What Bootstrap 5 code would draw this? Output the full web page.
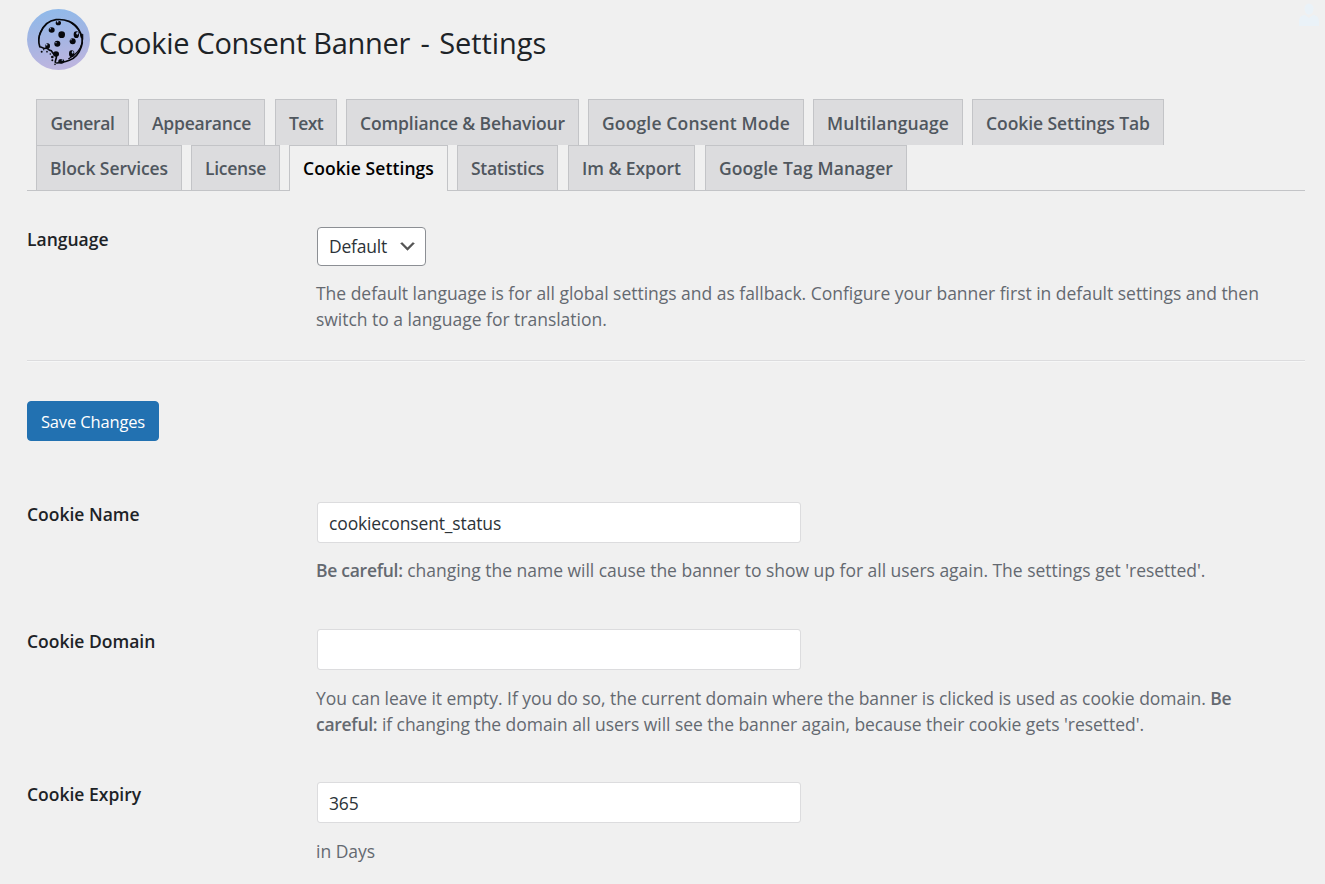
<!DOCTYPE html>
<html lang="en">
<head>
<meta charset="utf-8">
<meta name="viewport" content="width=device-width, initial-scale=1">
<title>Cookie Consent Banner - Settings</title>
<link href="https://cdn.jsdelivr.net/npm/bootstrap@5.3.0/dist/css/bootstrap.min.css" rel="stylesheet">
<style>
body{background:#f0f0f0;font-family:"Open Sans","Noto Sans",sans-serif;font-size:17.5px;line-height:26px;color:#646970;overflow:hidden}
.wrap-page{padding:9px 20px 0 27px}
.page-title{font-size:29px;line-height:40px;color:#1d2327;letter-spacing:-.08px;margin:14px 0 0 9px;font-weight:400}
.page-title .plugin-name{letter-spacing:-.3px}
.page-title .dash{margin:0 2px 0 3px}
.head-icon{width:63px;height:61px;flex:none}
.tab-bar{margin-top:29px;padding-left:9px;border-bottom:1px solid #c3c4c7}
.tab-row{gap:9px}
.tab-row .nav-link{height:46px;border:1px solid #c3c4c7;border-bottom:0;border-radius:0;background:#dcdcde;color:#50575e;font-weight:600;line-height:26px;padding:10px 0 0;text-align:center;white-space:nowrap;flex:none}
.tab-row.second .nav-link{height:45px;padding-top:9px}
.tab-row.second .nav-link.active{background:#f0f0f0;color:#000;height:46px;margin-bottom:-1px}
.t-general{width:93px;letter-spacing:-.37px}
.t-appearance{width:127px;letter-spacing:-.22px;margin-right:1px}
.t-text{width:62px;letter-spacing:-.6px}
.t-compliance{width:233px;letter-spacing:-.12px}
.t-consent{width:216px;letter-spacing:.15px}
.t-multi{width:150px;letter-spacing:.09px}
.t-tab{width:192px;letter-spacing:-.07px}
.t-block{width:146px;letter-spacing:-.08px}
.t-license{width:89px;letter-spacing:-.27px}
.t-cookie{width:159px;letter-spacing:.08px}
.t-stats{width:101px;letter-spacing:-.3px;margin-right:1px}
.t-export{width:127px;letter-spacing:-.05px;margin-right:1px}
.t-gtm{width:202px;letter-spacing:.08px}
.row-lang{margin-top:36px}
.row-name{margin-top:61px}
.row-domain{margin-top:46px}
.row-expiry{margin-top:45px}
.field-label{width:290px;flex:none;font-weight:600;color:#1d2327;margin-top:-1px}
.form-control,.form-select{font-size:17.5px;color:#2c3338;letter-spacing:-.14px}
.form-control{width:484px;height:41px;border-color:#dcdcde;border-radius:3px;padding:0 11px}
.form-select{width:109px;height:39px;border-color:#8c8f94;border-radius:4px;padding:0 30px 0 11px;letter-spacing:-.2px;background-image:url("data:image/svg+xml,%3Csvg xmlns='http://www.w3.org/2000/svg' viewBox='0 0 20 20'%3E%3Cpath d='M5 6l5 5 5-5 2 1-7 7-7-7 2-1z' fill='%23555'/%3E%3C/svg%3E");background-size:21px 21px;background-position:right 7px top 8px}
.hint{margin:14px 0 0 -1px;letter-spacing:-.02px;width:960px}
.row-domain .hint,.row-expiry .hint{margin-top:15px}
.row-domain .hint{letter-spacing:-.045px}
.hint b{font-weight:600;letter-spacing:-.28px}
.divider{height:2px;margin-top:28px;background:linear-gradient(#dcdcde 50%,#f6f7f7 50%)}
.btn-save{width:132px;height:40px;margin-top:39px;padding:0;background:#2271b1;border-color:#2271b1;color:#fff;border-radius:4px;font-size:16.5px;letter-spacing:-.15px;line-height:40px}
.ghost-user{top:2px;right:6px;width:22px;height:26px}
</style>
</head>
<body>
<svg class="ghost-user position-absolute" viewBox="0 0 22 26" fill="#eaf2f8"><ellipse cx="12" cy="7" rx="4.500" ry="5.500"/><path d="M2 24v-5c0-4 3-6 6-6l4 3 4-3c3 0 6 2 6 6v5z"/></svg>
<main class="wrap-page">
  <header class="d-flex">
    <svg class="head-icon" viewBox="21 27 189 183">
      <defs><linearGradient id="sky" x1="0" y1="0" x2=".15" y2="1"><stop offset="0" stop-color="#8ebaea"/><stop offset=".5" stop-color="#a2b5e3"/><stop offset="1" stop-color="#bcb5df"/></linearGradient></defs>
      <ellipse cx="115.500" cy="118.500" rx="94.500" ry="91.500" fill="url(#sky)"/>
      <g fill="none" stroke="#07080c" stroke-linecap="round" stroke-linejoin="round">
        <path stroke-width="5" d="M59 139c-4-14-3-30 3-42 8-20 25-35 46-38 27-3 54 7 68 29 10 16 14 34 8 52-7 21-18 34-36 41-14 5-25 8-38 8"/>
        <path stroke-width="3.500" d="M56 118c1-15 7-29 18-40M154 69c17 11 27 26 30 44M188 103c2 20-4 38-15 52-8 10-17 16-27 21"/>
        <path stroke-width="5" d="M60 141c8-1 10 7 16 4 6-3 9 5 14 6 7-1 6 9 12 11 8 0 7 6 7 11-1 6-4 10-3 14"/>
      </g>
      <g fill="#07080c">
        <ellipse cx="115" cy="69" rx="8" ry="7"/><ellipse cx="95" cy="90" rx="9" ry="8"/><circle cx="125" cy="104" r="10"/><ellipse cx="169" cy="104" rx="8" ry="10"/><circle cx="112" cy="131" r="9"/><circle cx="158" cy="124" r="9"/><ellipse cx="83" cy="138" rx="7" ry="8"/><ellipse cx="108" cy="162" rx="9" ry="8"/><ellipse cx="155" cy="161" rx="8" ry="10"/><ellipse cx="124" cy="184" rx="9" ry="7"/>
        <circle cx="65" cy="155" r="3"/><circle cx="71" cy="149" r="2"/><circle cx="81" cy="155" r="2.500"/><circle cx="91" cy="162" r="2.500"/><circle cx="97" cy="171" r="4"/><circle cx="97" cy="181" r="3"/><circle cx="105" cy="193" r="2.500"/>
      </g>
      <g fill="#a4b6e3"><circle cx="113" cy="65" r="2.500"/><circle cx="91" cy="86" r="2"/><ellipse cx="172" cy="100" rx="3" ry="4"/><circle cx="108" cy="128" r="2"/><circle cx="153" cy="119" r="2"/><circle cx="80" cy="134" r="2.500"/><ellipse cx="158" cy="157" rx="2.500" ry="4"/><circle cx="127" cy="180" r="2.500"/></g>
    </svg>
    <h1 class="page-title"><span class="plugin-name">Cookie Consent Banner</span> <span class="dash">-</span> Settings</h1>
  </header>

  <nav class="tab-bar" aria-label="Settings sections">
    <div class="nav tab-row flex-nowrap">
      <a class="nav-link t-general" href="#">General</a>
      <a class="nav-link t-appearance" href="#">Appearance</a>
      <a class="nav-link t-text" href="#">Text</a>
      <a class="nav-link t-compliance" href="#">Compliance &amp; Behaviour</a>
      <a class="nav-link t-consent" href="#">Google Consent Mode</a>
      <a class="nav-link t-multi" href="#">Multilanguage</a>
      <a class="nav-link t-tab" href="#">Cookie Settings Tab</a>
    </div>
    <div class="nav tab-row second flex-nowrap">
      <a class="nav-link t-block" href="#">Block Services</a>
      <a class="nav-link t-license" href="#">License</a>
      <a class="nav-link t-cookie active" href="#">Cookie Settings</a>
      <a class="nav-link t-stats" href="#">Statistics</a>
      <a class="nav-link t-export" href="#">Im &amp; Export</a>
      <a class="nav-link t-gtm" href="#">Google Tag Manager</a>
    </div>
  </nav>

  <form>
    <div class="d-flex row-lang">
      <label class="field-label" for="lang">Language</label>
      <div>
        <select class="form-select" id="lang"><option>Default</option></select>
        <p class="hint">The default language is for all global settings and as fallback. Configure your banner first in default settings and then<br>switch to a language for translation.</p>
      </div>
    </div>
    <div class="divider"></div>
    <button type="button" class="btn btn-save d-block">Save Changes</button>
    <div class="d-flex row-name">
      <label class="field-label" for="cname">Cookie Name</label>
      <div>
        <input class="form-control" id="cname" value="cookieconsent_status">
        <p class="hint">
          <b>Be careful:</b> changing the name will cause the banner to show up for all users again. The settings get 'resetted'.</p>
      </div>
    </div>
    <div class="d-flex row-domain">
      <label class="field-label" for="cdomain">Cookie Domain</label>
      <div>
        <input class="form-control" id="cdomain">
        <p class="hint">You can leave it empty. If you do so, the current domain where the banner is clicked is used as cookie domain. <b>Be</b><br><b>careful:</b> if changing the domain all users will see the banner again, because their cookie gets 'resetted'.</p>
      </div>
    </div>
    <div class="d-flex row-expiry">
      <label class="field-label" for="cexp">Cookie Expiry</label>
      <div>
        <input class="form-control" id="cexp" value="365">
        <p class="hint">in Days</p>
      </div>
    </div>
  </form>
</main>
<script src="https://cdn.jsdelivr.net/npm/bootstrap@5.3.0/dist/js/bootstrap.bundle.min.js"></script>
</body>
</html>
